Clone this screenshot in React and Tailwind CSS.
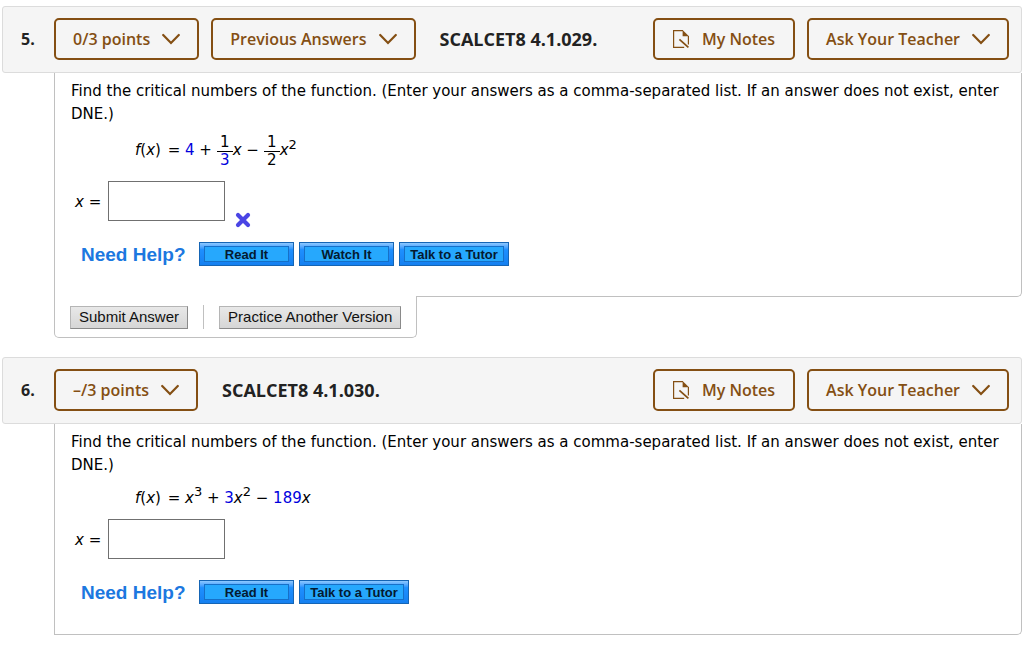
const QUESTIONS = [
  {
    number: '5.',
    points: '0/3 points',
    previous: true,
    code: 'SCALCET8 4.1.029.',
    wrong: true,
    help: ['Read It', 'Watch It', 'Talk to a Tutor'],
    actions: true,
  },
  {
    number: '6.',
    points: '–/3 points',
    previous: false,
    code: 'SCALCET8 4.1.030.',
    wrong: false,
    help: ['Read It', 'Talk to a Tutor'],
    actions: false,
  },
];

function Chevron() {
  return (
    <svg className="w-[18px] h-3 shrink-0" viewBox="0 0 18 12" fill="none" stroke="currentColor" strokeWidth="2.2" strokeLinecap="round">
      <path d="M1.2 2 L9 10 L16.8 2" />
    </svg>
  );
}

function NoteIcon() {
  return (
    <svg className="w-4 h-[18px] shrink-0" viewBox="0 0 16 18" fill="none" stroke="currentColor">
      <path d="M10 .6H.6V17.4H11.2M15.4 6V14.4" strokeWidth="1.2" />
      <path d="M9.6 0L16 6.2H9.6Z" fill="currentColor" stroke="none" />
      <path d="M6.4 9.4L15.4 17.4" strokeWidth="1.7" />
    </svg>
  );
}

function HeaderButton({ icon, chevron, children }) {
  return (
    <button
      type="button"
      className={`flex h-[42px] items-center whitespace-nowrap rounded-[5px] border-2 border-[#844f13] text-base font-semibold text-[#844f13] ${icon ? 'gap-[13px] px-[18px]' : 'gap-3 px-[17px]'}`}
    >
      {icon}
      {children}
      {chevron && <Chevron />}
    </button>
  );
}

function HelpButton({ label }) {
  const wide = label.length > 10;
  return (
    <button
      type="button"
      className={`flex h-6 border border-[#1565b5] bg-linear-to-b from-[#8cc8ff] via-[#1e90ff] via-30% to-[#1580f0] px-1 py-[3px] ${wide ? 'w-[110px]' : 'w-[95px]'}`}
    >
      <span className="flex h-4 flex-1 items-center justify-center whitespace-nowrap border border-[#1670c8] bg-[#26a8fd] pt-[2px] font-['Liberation_Sans',Arial,sans-serif] text-[13px] font-bold leading-4 text-[#041a30]">
        {label}
      </span>
    </button>
  );
}

function Fraction({ top, bottom, blue }) {
  return (
    <span className="inline-flex w-4 flex-col items-center pt-[2px] text-[15px] leading-[17px]">
      <span className="w-full border-b border-black text-center">{top}</span>
      <span className={blue ? 'text-[#0000dd]' : ''}>{bottom}</span>
    </span>
  );
}

function Sup({ children }) {
  return <span className="mb-3 text-[13px] leading-4">{children}</span>;
}

function FunctionOfX() {
  return (
    <span className="pr-[2px]">
      <i>f</i>(<i>x</i>)
    </span>
  );
}

function FirstFormula() {
  return (
    <div className="mt-[7px] mb-[13px] ml-16 flex h-[35px] items-center whitespace-pre">
      <FunctionOfX /> = <span className="text-[#0000dd]">4</span> + <Fraction top="1" bottom="3" blue />
      <i>x</i> − <Fraction top="1" bottom="2" />
      <i>x</i>
      <Sup>2</Sup>
    </div>
  );
}

function SecondFormula() {
  return (
    <div className="mt-[10px] mb-[10px] ml-16 flex h-[22px] items-center whitespace-pre">
      <FunctionOfX /> = <i>x</i>
      <Sup>3</Sup> + <span className="text-[#0000dd]">3</span>
      <i>x</i>
      <Sup>2</Sup> − <span className="text-[#0000dd]">189</span>
      <i>x</i>
    </div>
  );
}

function WrongMark() {
  return (
    <svg className="ml-[10px] mt-[38px] size-4" viewBox="0 0 16 16" role="img" aria-label="Incorrect">
      <path d="M3 3L13 13M13 3L3 13" stroke="#4a45e4" strokeWidth="4.2" strokeLinecap="round" />
    </svg>
  );
}

function ActionButton({ children }) {
  return (
    <button
      type="button"
      className="h-[23px] whitespace-nowrap border border-[#b5b5b5] border-r-[#8a8a8a] border-b-[#8a8a8a] bg-linear-to-b from-[#e8e8e8] to-[#d6d6d6] px-2 font-['Liberation_Sans',Arial,sans-serif] text-[15px] leading-5 text-[#111]"
    >
      {children}
    </button>
  );
}

function Question({ number, points, previous, code, wrong, help, actions }) {
  const inputId = `answer-${parseInt(number, 10)}`;

  return (
    <section>
      <header className="flex h-[67px] items-center rounded-[3px] border border-[#dcdcdc] bg-[#f5f5f5] pr-3 pb-[2px] font-['Open_Sans',sans-serif]">
        <span className="w-[51px] shrink-0 pl-[18px] text-base font-bold text-[#222]">{number}</span>
        <div className="flex gap-3">
          <HeaderButton chevron>{points}</HeaderButton>
          {previous && <HeaderButton chevron>Previous Answers</HeaderButton>}
        </div>
        <h2 className="ml-6 whitespace-nowrap text-lg font-bold text-[#222]">{code}</h2>
        <div className="ml-auto flex gap-3">
          <HeaderButton icon={<NoteIcon />}>My Notes</HeaderButton>
          <HeaderButton chevron>Ask Your Teacher</HeaderButton>
        </div>
      </header>

      <div className="ml-[52px]">
        <div className="rounded-br-[5px] border border-t-0 border-[#c0c0c0] px-4 pt-[7px] pb-[30px] text-[15px] leading-[23px]">
          <p>
            Find the critical numbers of the function. (Enter your answers as a comma-separated list. If an answer does not
            exist, enter DNE.)
          </p>
          {previous ? <FirstFormula /> : <SecondFormula />}
          <div className="ml-1 flex h-10 items-center">
            <label htmlFor={inputId} className="w-[33px] whitespace-nowrap pt-[2px]">
              <i>x</i> =
            </label>
            <input id={inputId} type="text" className="h-10 w-[117px] border border-[#707070] bg-white px-2" />
            {wrong && <WrongMark />}
          </div>
          <div className="mt-[21px] ml-[10px] flex h-6 items-center gap-[5px]">
            <span className="w-[113px] whitespace-nowrap font-['Liberation_Sans',Arial,sans-serif] text-[19px] font-bold text-[#1c78e0]">
              Need Help?
            </span>
            {help.map((label) => (
              <HelpButton key={label} label={label} />
            ))}
          </div>
        </div>

        {actions && (
          <div className="relative -mt-px flex w-fit items-center rounded-b-[5px] border border-t-0 border-[#c0c0c0] bg-white px-[15px] pt-[9px] pb-2">
            <ActionButton>Submit Answer</ActionButton>
            <span className="mx-[15px] h-6 w-px bg-[#c0c0c0]" />
            <ActionButton>Practice Another Version</ActionButton>
          </div>
        )}
      </div>
    </section>
  );
}

export default function App() {
  return (
    <main className="flex min-h-screen flex-col gap-[19px] bg-white px-[2px] pt-[6px] font-['DejaVu_Sans',Verdana,sans-serif] text-black">
      {QUESTIONS.map((question) => (
        <Question key={question.number} {...question} />
      ))}
    </main>
  );
}
